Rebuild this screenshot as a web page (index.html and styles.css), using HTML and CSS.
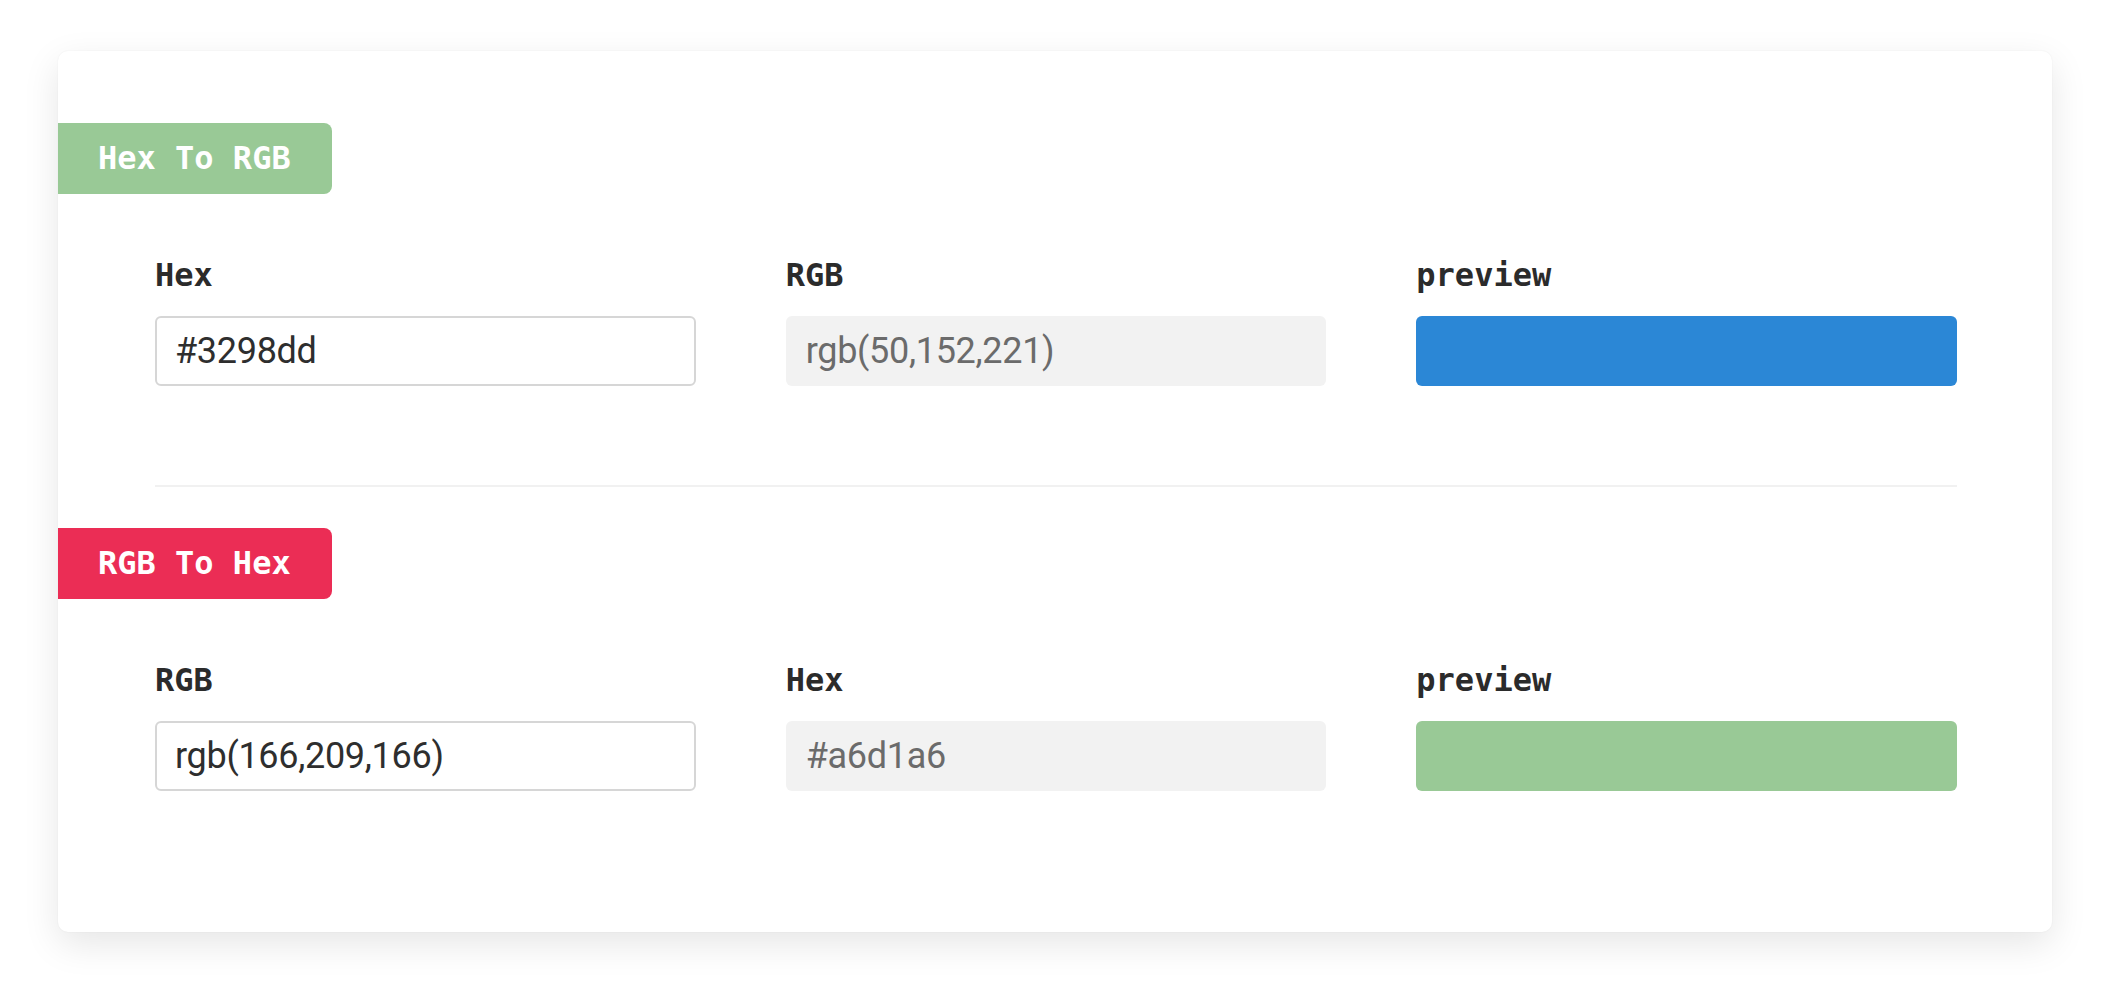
FILE: index.html
```html
<!DOCTYPE html>
<html>
<head>
<meta charset="utf-8">
<link rel="stylesheet" href="styles.css">
</head>
<body>
<div class="card">
  <section class="section first">
    <div class="badge green">Hex To RGB</div>
    <div class="grid">
      <div class="col">
        <div class="label">Hex</div>
        <input class="field edit" type="text" value="#3298dd">
      </div>
      <div class="col">
        <div class="label">RGB</div>
        <input class="field readonly" type="text" value="rgb(50,152,221)" readonly>
      </div>
      <div class="col">
        <div class="label">preview</div>
        <div class="preview blue"></div>
      </div>
    </div>
  </section>
  <hr class="divider">
  <section class="section second">
    <div class="badge red">RGB To Hex</div>
    <div class="grid">
      <div class="col">
        <div class="label">RGB</div>
        <input class="field edit" type="text" value="rgb(166,209,166)">
      </div>
      <div class="col">
        <div class="label">Hex</div>
        <input class="field readonly" type="text" value="#a6d1a6" readonly>
      </div>
      <div class="col">
        <div class="label">preview</div>
        <div class="preview green"></div>
      </div>
    </div>
  </section>
</div>
</body>
</html>
```

FILE: styles.css
```css
* { box-sizing: border-box; }
html, body { background: #ffffff; }
body {
  margin: 0;
  padding: 51px 0 58px 58px;
  min-height: 990px;
  font-family: "DejaVu Sans Mono", monospace;
}
.card {
  width: 1994px;
  height: 881px;
  background: #ffffff;
  border-radius: 10px;
  box-shadow: 0 12px 36px rgba(0, 0, 0, 0.1), 0 0 2px rgba(0, 0, 0, 0.06);
  padding: 72px 95px 0 0;
}
.section.second { margin-top: 41px; }
.badge {
  display: inline-block;
  height: 71px;
  line-height: 71px;
  padding: 0 41px 0 40px;
  border-radius: 0 8px 8px 0;
  font-family: "DejaVu Sans Mono", monospace;
  font-weight: bold;
  font-size: 32px;
  color: #ffffff;
  white-space: pre;
}
.badge.green { background: #99c996; }
.badge.red { background: #eb2d55; }
.grid {
  display: grid;
  grid-template-columns: 1fr 1fr 1fr;
  column-gap: 90px;
  margin: 61px 0 0 97px;
}
.label {
  font-family: "DejaVu Sans Mono", monospace;
  font-weight: bold;
  font-size: 32px;
  line-height: 40px;
  color: #2b2b2b;
  margin-bottom: 21px;
}
.field {
  display: block;
  width: 100%;
  height: 70px;
  margin: 0;
  border-radius: 6px;
  padding: 0 18px;
  font-family: Roboto, "Liberation Sans", sans-serif;
  font-size: 36px;
  letter-spacing: -0.3px;
  outline: none;
}
.field.edit {
  border: 2px solid #d6d6d6;
  background: #ffffff;
  color: #2e2e2e;
}
.field.readonly {
  border: 0;
  background: #f2f2f2;
  color: #6b6b6b;
  padding-left: 20px;
}
.preview {
  height: 70px;
  border-radius: 6px;
}
.preview.blue { background: #2b87d6; }
.preview.green { background: #99c996; }
.divider {
  border: 0;
  height: 2px;
  background: #f1f1f1;
  margin: 99px 0 0 97px;
}
```
